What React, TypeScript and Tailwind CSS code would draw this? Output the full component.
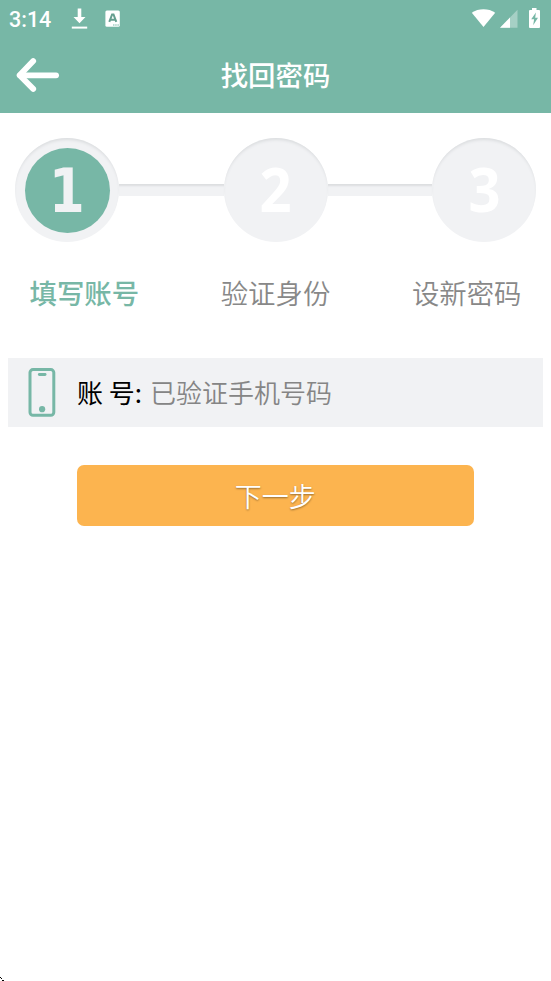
import clsx from "clsx";

const STEPS = [
    { no: 1, label: "填写账号" },
    { no: 2, label: "验证身份" },
    { no: 3, label: "设新密码" },
];

export default function App() {
    const current = 1;

    return (
        <div className="relative flex h-[981px] w-[551px] flex-col overflow-hidden bg-white font-['Noto_Sans_CJK_SC',sans-serif]">
            <header className="h-[113px] shrink-0 bg-[#77b7a6] text-white">
                <StatusBar />
                <TitleBar title="找回密码" />
            </header>

            <StepBar current={current} />

            {/* account field */}
            <div className="mx-2 mt-[47px] flex h-[69px] shrink-0 items-center bg-[#f1f2f4] pl-5 text-[26px]">
                <PhoneIcon />
                <label className="ml-[21px] w-[73px] pb-px leading-[38px] whitespace-nowrap text-black">账 号:</label>
                <span className="pb-px leading-[38px] font-[350] text-[#858585]">已验证手机号码</span>
            </div>

            <button className="mt-[38px] ml-[76.5px] h-[61px] w-[397.5px] shrink-0 rounded-[7px] bg-[#fcb44f] text-[27px] leading-[60px] font-[350] text-white [text-shadow:0_1px_2px_rgba(0,0,0,0.4)]">
                下一步
            </button>

            <CornerMark />
        </div>
    );
}

function StatusBar() {
    return (
        <div className="flex h-[37px] items-center justify-between pr-[10px] pl-[9px]">
            <div className="flex items-center">
                <span className="w-[62px] pt-[2px] font-['Roboto',sans-serif] text-[21.5px] leading-[36px] font-medium">3:14</span>
                {/* download */}
                <svg width="17" height="22" viewBox="0 0 17 22" fill="white">
                    <path d="M6.7 0.5h3.6v8.4h4.2L8.5 15.3 2.5 8.9h4.2z" />
                    <path d="M0.8 18.6h15.4v2H0.8z" />
                </svg>
                {/* keyboard input */}
                <svg className="ml-[17px]" width="17" height="18" viewBox="0 0 17 18">
                    <rect x="0.4" y="0.6" width="14.4" height="16.2" rx="1.5" fill="white" />
                    <path d="M4.3 11.8 7.1 4.5h1.4l2.8 7.3M5.6 9.7h4.6" fill="none" stroke="#659e8f" strokeWidth="2" />
                    <path d="M8 15h6" stroke="#77b7a6" strokeWidth="1" strokeDasharray="1.5 0.7" />
                </svg>
            </div>
            <div className="flex items-center">
                {/* wifi */}
                <svg width="25" height="20" viewBox="0 0 25 20" fill="white">
                    <path d="M12.5 18 .8 3.7C7.5-.9 17.5-.9 24.2 3.7z" />
                </svg>
                {/* signal */}
                <svg className="ml-1" width="18" height="20" viewBox="0 0 18 20">
                    <path d="M0 18.8 17.5 .8v18z" fill="white" fillOpacity="0.35" />
                    <path d="M0 18.8 10 8.5v10.3z" fill="white" />
                </svg>
                {/* charging battery */}
                <svg className="ml-[10px]" width="13" height="21" viewBox="0 0 13 21">
                    <path d="M4 0h4.5v2H11q1 0 1 1v16q0 1-1 1H2q-1 0-1-1V3q0-1 1-1h2z" fill="white" />
                    <path d="M7.9 4.5 3.2 11.2h2.9L5.2 17.2 10 9.8H7.2z" fill="#77b7a6" />
                </svg>
            </div>
        </div>
    );
}

function TitleBar({ title }: { title: string }) {
    return (
        <div className="grid h-[76px] grid-cols-[1fr_auto_1fr] items-center">
            <svg className="ml-4" width="45" height="36" viewBox="0 0 45 36" fill="none" stroke="white" strokeLinecap="round" strokeLinejoin="round">
                <path d="M17.2 4 3.6 18.3l13.6 13.6" strokeWidth="5.8" />
                <path d="M4 18.3h36.1" strokeWidth="5.8" />
            </svg>
            <h1 className="pb-[2px] text-[27.4px] leading-[40px] font-medium">{title}</h1>
        </div>
    );
}

function StepBar({ current }: { current: number }) {
    return (
        <section className="shrink-0">
            <div className="flex items-center px-[15px] pt-[25px]">
                {STEPS.map((s) => (
                    <div key={s.no} className="contents">
                        {s.no > 1 && (
                            <div className="h-3 flex-1 bg-[#f1f2f4] shadow-[inset_0_3px_2px_-1px_#dcdee0]" />
                        )}
                        <StepCircle no={s.no} active={s.no === current} />
                    </div>
                ))}
            </div>
            <div className="mt-[31px] flex justify-between px-[29.5px] text-[27.4px] leading-[38px]">
                {STEPS.map((s) => (
                    <span
                        key={s.no}
                        className={clsx(s.no === current ? "font-medium text-[#77b7a6]" : "font-[350] text-[#888888]")}
                    >
                        {s.label}
                    </span>
                ))}
            </div>
        </section>
    );
}

function StepCircle({ no, active }: { no: number; active: boolean }) {
    return (
        <div className="flex size-[104px] shrink-0 items-center justify-center rounded-full bg-[#f1f2f4] shadow-[inset_0_3px_3px_-1px_#dcdee0]">
            <div
                className={clsx(
                    "flex size-[85px] items-center justify-center rounded-full font-bold",
                    active ? "bg-[#77b7a6] text-[#f1f2f4]" : "text-white",
                    // only the "1" needs a face with a foot serif
                    no === 1
                        ? "pt-px font-['DejaVu_Sans_Condensed','DejaVu_Sans',sans-serif] text-[60px] leading-[82px] [font-stretch:condensed]"
                        : "pb-[3px] font-['Noto_Sans',sans-serif] text-[61px] leading-[82px]"
                )}
            >
                <span className={no === 1 ? "scale-x-95" : "scale-x-92"}>{no}</span>
            </div>
        </div>
    );
}

function PhoneIcon() {
    return (
        <svg width="28" height="50" viewBox="0 0 28 50" fill="none" stroke="#77b7a6">
            <rect x="2" y="1.6" width="23.8" height="45.6" rx="3" strokeWidth="3" />
            <path d="M11.3 6.5h5.8" strokeWidth="2.8" strokeLinecap="round" />
            <circle cx="14.1" cy="41.2" r="3.1" fill="#77b7a6" stroke="none" />
        </svg>
    );
}

// little black specks in the bottom left corner
function CornerMark() {
    return (
        <svg className="absolute bottom-0 left-0" width="4" height="4" viewBox="0 0 4 4" shapeRendering="crispEdges">
            <path d="M0 0h1v1H0zM1 1h1v1H1zM2 3h2v1H2z" fill="black" />
        </svg>
    );
}
